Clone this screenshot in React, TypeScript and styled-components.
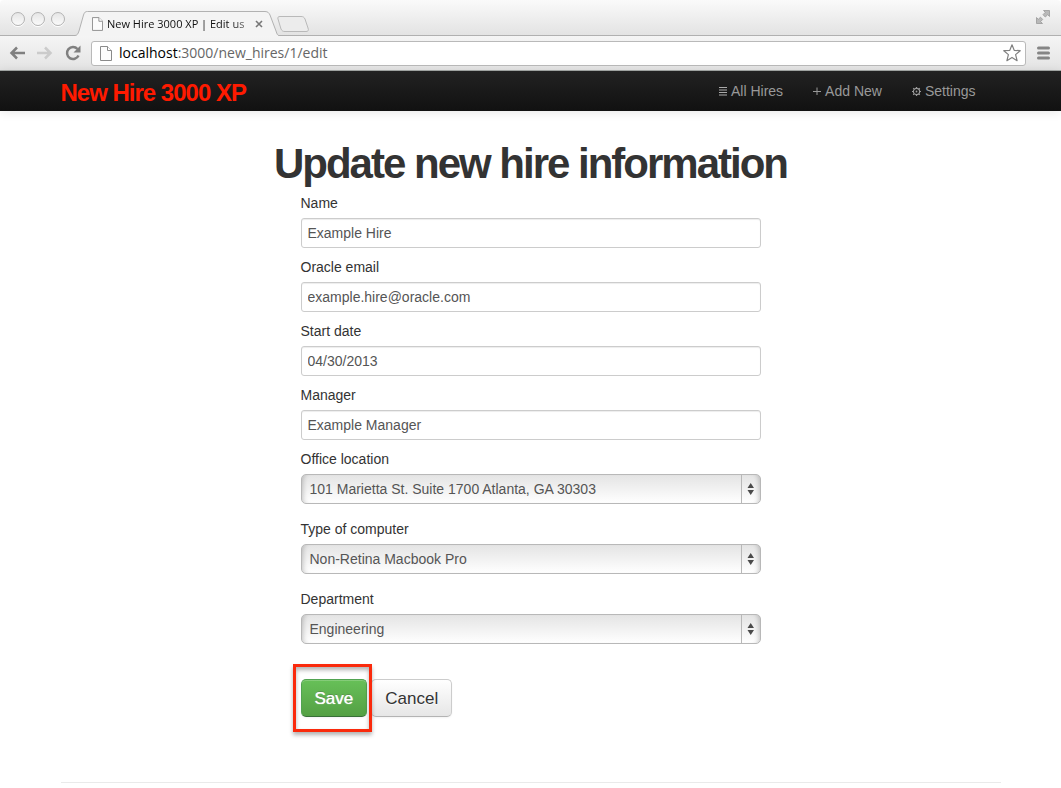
import React from "react";
import styled, { createGlobalStyle, css } from "styled-components";

const GlobalStyle = createGlobalStyle`
  *, *::before, *::after { box-sizing: border-box; }
  body {
    margin: 0;
    background: #fff;
    color: #333;
    font: 14px/20px "Liberation Sans", Arial, sans-serif;
  }
`;

const chromeFont = css`
  font-family: "Open Sans", "Noto Sans", sans-serif;
`;

const Window = styled.div`
  display: flex;
  flex-direction: column;
  min-height: 100vh;
`;

const TabStrip = styled.div`
  display: flex;
  height: 36px;
  padding: 0 8px 0 11px;
  border-bottom: 1px solid #b0b0b0;
  border-radius: 4px 4px 0 0;
  background: linear-gradient(#fafafa, #e3e3e3);
`;

const WindowButtons = styled.div`
  display: flex;
  gap: 6px;
  align-items: center;
  height: 38px;
  width: 64px;
`;

const WindowButton = styled.button`
  width: 14px;
  height: 14px;
  padding: 0;
  border: 1px solid #b2b2b2;
  border-radius: 50%;
  background: linear-gradient(#e6e6e6, #fafafa);
  box-shadow: 0 1px 0 #fff;
`;

const Tab = styled.div`
  ${chromeFont}
  position: relative;
  display: flex;
  align-items: center;
  width: 204px;
  height: 36px;
  padding: 12px 11px 0 17px;
  color: #111;
  font-size: 11px;
  line-height: 24px;
`;

const TabShape = styled.svg`
  position: absolute;
  left: 0;
  top: 0;
`;

const TabTitle = styled.span`
  position: relative;
  flex: 1;
  margin-left: 4px;
  white-space: nowrap;
  mask-image: linear-gradient(to right, #000 85%, transparent 110%);
`;

const GlyphButton = styled.button`
  position: relative;
  display: flex;
  flex: none;
  align-items: center;
  justify-content: center;
  padding: 0;
  border: 0;
  background: none;
`;

const PageGlyph = styled.svg`
  position: relative;
  flex: none;
`;

const NewTabButton = styled(GlyphButton)`
  width: 36px;
  height: 34px;
  margin-left: -4px;
  padding-top: 14px;
`;

const FullScreenButton = styled(GlyphButton)`
  height: 34px;
  margin-left: auto;
`;

const Toolbar = styled.div`
  display: flex;
  align-items: center;
  height: 35px;
  padding: 0 10px 0 9px;
  border-bottom: 1px solid #a5a9a7;
  background: linear-gradient(#f5f5f5, #e4e4e4);
`;

const NavButtons = styled.div`
  display: flex;
  width: 82px;
  gap: 12px;
`;

const AddressBar = styled.div`
  display: flex;
  flex: 1;
  align-items: center;
  height: 25px;
  margin-right: 10px;
  padding: 0 4px 0 8px;
  border: 1px solid #b9b9b9;
  border-radius: 3px;
  background: #fff;
`;

const Address = styled.div`
  ${chromeFont}
  flex: 1;
  margin-left: 7px;
  color: #666;
  font-size: 14px;
  line-height: 20px;

  b {
    color: #000;
    font-weight: 400;
  }
`;

const NavBar = styled.header`
  background: linear-gradient(#222, #111);
  box-shadow: 0 1px 10px rgba(0, 0, 0, 0.1);
`;

const Container = styled.div`
  width: 100%;
  max-width: 940px;
  margin: 0 auto;
`;

const NavRow = styled(Container)`
  display: flex;
  align-items: center;
  justify-content: space-between;
  height: 40px;
`;

const Brand = styled.a`
  padding-top: 3px;
  color: #ff1a00;
  font-size: 24px;
  font-weight: 700;
  line-height: 24px;
  letter-spacing: -1px;
  text-decoration: none;
`;

const NavLinks = styled.nav`
  display: flex;
  gap: 30px;
  padding-right: 25px;
`;

const NavLink = styled.a`
  display: flex;
  align-items: center;
  gap: 4px;
  color: #999;
  text-decoration: none;
`;

const Main = styled(Container)`
  flex: 1;
  padding-top: 32px;
`;

const Title = styled.h1`
  margin: 0 0 8px;
  font-size: 42px;
  line-height: 42px;
  letter-spacing: -2px;
  text-align: center;
`;

const Form = styled.form`
  max-width: 460px;
  margin: 0 auto;
`;

const Field = styled.div<{ $gap: number }>`
  margin-bottom: ${(p) => p.$gap}px;
`;

const Label = styled.label`
  display: block;
  margin-bottom: 5px;
`;

const TextInput = styled.input`
  display: block;
  width: 100%;
  height: 30px;
  padding: 4px 6px;
  border: 1px solid #ccc;
  border-radius: 3px;
  background: #fff;
  box-shadow: inset 0 1px 1px rgba(0, 0, 0, 0.075);
  color: #555;
  font: inherit;
`;

const SelectBox = styled.div`
  position: relative;
`;

const Select = styled.select`
  display: block;
  width: 100%;
  height: 30px;
  padding: 0 30px 0 8px;
  border: 1px solid #b8b8b8;
  border-radius: 5px;
  appearance: none;
  background: linear-gradient(#e4e4e4, #fff);
  box-shadow: inset 5px 0 5px -4px rgba(0, 0, 0, 0.22),
    inset -5px 0 5px -4px rgba(0, 0, 0, 0.22);
  color: #555;
  font: inherit;
`;

const SelectArrows = styled.svg`
  position: absolute;
  top: 1px;
  right: 1px;
  pointer-events: none;
`;

const Actions = styled.div`
  display: flex;
  gap: 4px;
  margin: 35px 0 65px;
`;

const Highlight = styled.div`
  position: relative;

  &::after {
    content: "";
    position: absolute;
    z-index: 1;
    inset: -15px -5px -15px -8px;
    border: 3px solid #fa2a0c;
    box-shadow: 0 3px 4px rgba(0, 0, 0, 0.3),
      inset 0 3px 4px rgba(0, 0, 0, 0.3);
    pointer-events: none;
  }
`;

const Button = styled.button<{ $primary?: boolean }>`
  height: 38px;
  padding: 2px 13px 0;
  border: 1px solid;
  border-color: ${(p) => (p.$primary ? "#51a351 #51a351 #387038" : "#ccc #ccc #b3b3b3")};
  border-radius: 5px;
  background: ${(p) =>
    p.$primary ? "linear-gradient(#67c058, #54a044)" : "linear-gradient(#fff, #e6e6e6)"};
  box-shadow: inset 0 1px 0 rgba(255, 255, 255, 0.2), 0 1px 2px rgba(0, 0, 0, 0.05);
  color: ${(p) => (p.$primary ? "#fff" : "#333")};
  font: 17px/22px "Liberation Sans", Arial, sans-serif;
  text-shadow: ${(p) =>
    p.$primary ? "0 0 1px #fff, 0 -1px 0 rgba(0, 0, 0, 0.25)" : "0 1px 1px rgba(255, 255, 255, 0.75)"};
`;

const Footer = styled(Container)`
  height: 6px;
  border-top: 1px solid #eaeaea;
`;

const PageIcon = ({ width, height }: { width: number; height: number }) => (
  <PageGlyph width={width} height={height} viewBox="0 0 12 15" aria-hidden="true">
    <path d="M.5 .5h7L11.500 4.500V14.500H.5z" fill="#fcfcfc" stroke="#8a8a8a" />
    <path d="M7.500 .5V4.500H11.500" fill="#fff" stroke="#8a8a8a" />
  </PageGlyph>
);

const ListIcon = () => (
  <svg width="8" height="10" aria-hidden="true">
    <path d="M0 1.500h8M0 4h8M0 6.500h8M0 9h8" stroke="#aaa" />
  </svg>
);

const PlusIcon = () => (
  <svg width="8" height="8" aria-hidden="true">
    <path d="M0 4.500h8M4 .5v8" stroke="#999" />
  </svg>
);

const GearIcon = () => (
  <svg width="9" height="9" viewBox="0 0 9 9" fill="none" stroke="#999" aria-hidden="true">
    <circle cx="4.500" cy="4.500" r="3.100" strokeWidth="1.200" />
    <circle cx="4.500" cy="4.500" r=".9" fill="#999" stroke="none" />
    <path d="M4.500 0v1.500M4.500 7.500V9M0 4.500h1.500M7.500 4.500H9M1.200 1.200l1 1M6.800 6.800l1 1M7.800 1.200l-1 1M2.200 6.800l-1 1" strokeWidth="1.200" />
  </svg>
);

const textFields = [
  { id: "name", label: "Name", value: "Example Hire" },
  { id: "email", label: "Oracle email", value: "example.hire@oracle.com" },
  { id: "start", label: "Start date", value: "04/30/2013" },
  { id: "manager", label: "Manager", value: "Example Manager" },
];

const selectFields = [
  { id: "office", label: "Office location", value: "101 Marietta St. Suite 1700 Atlanta, GA 30303" },
  { id: "computer", label: "Type of computer", value: "Non-Retina Macbook Pro" },
  { id: "department", label: "Department", value: "Engineering" },
];

const BrowserChrome = () => (
  <div>
    <TabStrip>
      <WindowButtons>
        <WindowButton aria-label="Close window" />
        <WindowButton aria-label="Minimize window" />
        <WindowButton aria-label="Zoom window" />
      </WindowButtons>
      <Tab>
        <TabShape width="204" height="36" aria-hidden="true">
          <path
            d="M0 36V35.500C2 35.500 3 34 4 31L8.500 15C9.500 12 10.500 11.500 12.500 11.500H190C193 11.500 194 13 195 15L201 31C202 34 202.500 35.500 204 35.500V36z"
            fill="#f4f4f4"
          />
          <path
            d="M0 35.500C2 35.500 3 34 4 31L8.500 15C9.500 12 10.500 11.500 12.500 11.500H190C193 11.500 194 13 195 15L201 31C202 34 202.500 35.500 204 35.500"
            fill="none"
            stroke="#b2b2b2"
          />
        </TabShape>
        <PageIcon width={11} height={14} />
        <TabTitle>New Hire 3000 XP | Edit us</TabTitle>
        <GlyphButton aria-label="Close tab">
          <svg width="16" height="10">
            <path d="M4 2l6 6M10 2l-6 6" stroke="#777" strokeWidth="1.600" />
          </svg>
        </GlyphButton>
      </Tab>
      <NewTabButton aria-label="New tab">
        <svg width="34" height="18">
          <path
            d="M4 1.500H25C27 1.500 28 2 29 4L32 13C33 15.500 32 16.500 30 16.500H9C7 16.500 6 16 5 14L2 4C1.500 2.500 2 1.500 4 1.500z"
            fill="#ececec"
            stroke="#b9b9b9"
          />
        </svg>
      </NewTabButton>
      <FullScreenButton aria-label="Full screen">
        <svg width="18" height="16" fill="#b9b9b9" stroke="#999" strokeWidth=".8">
          <path d="M8.500 1.500H14.500V7.500L12.700 5.700L10.300 8L8 5.700L10.300 3.300z" />
          <path d="M1.500 8.500L3.300 10.300L5.500 8.200L7.700 10.400L5.600 12.600L7.500 14.500H1.500z" />
        </svg>
      </FullScreenButton>
    </TabStrip>
    <Toolbar>
      <NavButtons>
        <GlyphButton aria-label="Back">
          <svg width="16" height="16" fill="none" stroke="#808080" strokeWidth="2.500">
            <path d="M16 8H3M8 2.500L2.500 8L8 13.500" />
          </svg>
        </GlyphButton>
        <GlyphButton aria-label="Forward">
          <svg width="16" height="16" fill="none" stroke="#cbcbcb" strokeWidth="2.500">
            <path d="M0 8H13M8 2.500L13.500 8L8 13.500" />
          </svg>
        </GlyphButton>
        <GlyphButton aria-label="Reload">
          <svg width="16" height="16">
            <path d="M13.500 10.500A6 6 0 1 1 12.500 4" fill="none" stroke="#808080" strokeWidth="2.500" />
            <path d="M15.500 .5V7.500H8.500z" fill="#808080" />
          </svg>
        </GlyphButton>
      </NavButtons>
      <AddressBar>
        <PageIcon width={12} height={15} />
        <Address>
          <b>localhost</b>:3000/new_hires/1/edit
        </Address>
        <GlyphButton aria-label="Bookmark this page">
          <svg width="18" height="18">
            <path
              d="M9 .8L11.200 6.300L17.200 6.700L12.600 10.600L14.100 16.700L9 13.400L3.900 16.700L5.400 10.600L.8 6.700L6.800 6.300z"
              fill="#fff"
              stroke="#808080"
              strokeWidth="1.200"
              strokeLinejoin="round"
            />
          </svg>
        </GlyphButton>
      </AddressBar>
      <GlyphButton aria-label="Menu">
        <svg width="15" height="14">
          <path d="M2.500 2H12.500M2.500 7H12.500M2.500 12H12.500" stroke="#858585" strokeWidth="3" strokeLinecap="round" />
        </svg>
      </GlyphButton>
    </Toolbar>
  </div>
);

export default function App() {
  return (
    <Window>
      <GlobalStyle />
      <BrowserChrome />
      <NavBar>
        <NavRow>
          <Brand href="#">New Hire 3000 XP</Brand>
          <NavLinks>
            <NavLink href="#all"><ListIcon />All Hires</NavLink>
            <NavLink href="#new"><PlusIcon />Add New</NavLink>
            <NavLink href="#settings"><GearIcon />Settings</NavLink>
          </NavLinks>
        </NavRow>
      </NavBar>
      <Main as="main">
        <Title>Update new hire information</Title>
        <Form onSubmit={(e) => e.preventDefault()}>
          {textFields.map((f) => (
            <Field key={f.id} $gap={9}>
              <Label htmlFor={f.id}>{f.label}</Label>
              <TextInput id={f.id} type="text" defaultValue={f.value} />
            </Field>
          ))}
          {selectFields.map((f) => (
            <Field key={f.id} $gap={15}>
              <Label htmlFor={f.id}>{f.label}</Label>
              <SelectBox>
                <Select id={f.id} defaultValue={f.value}>
                  <option>{f.value}</option>
                </Select>
                <SelectArrows width="19" height="28" aria-hidden="true">
                  <path d="M.5 0V28" stroke="#b8b8b8" />
                  <path d="M6.500 13L9.700 8L13 13zM6.500 15H13L9.700 20z" fill="#4a4a4a" />
                </SelectArrows>
              </SelectBox>
            </Field>
          ))}
          <Actions>
            <Highlight>
              <Button type="submit" $primary>Save</Button>
            </Highlight>
            <Button type="button">Cancel</Button>
          </Actions>
        </Form>
      </Main>
      <Footer as="footer" />
    </Window>
  );
}
